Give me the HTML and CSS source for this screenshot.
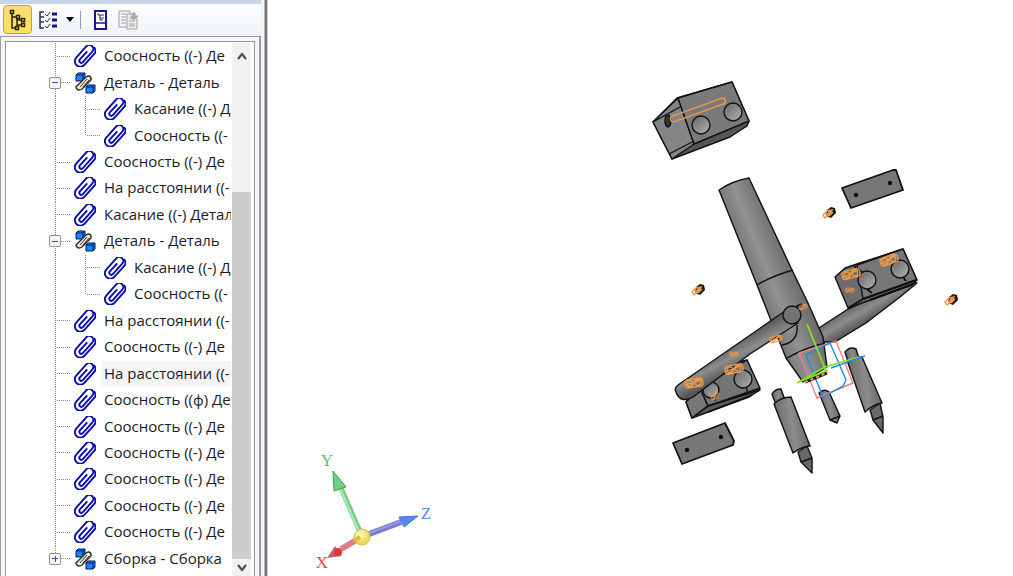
FILE: index.html
```html
<!DOCTYPE html>
<html lang="ru">
<head>
<meta charset="utf-8">
<title>Сборка</title>
<link rel="stylesheet" href="styles.css">
</head>
<body>
<svg class="defs" aria-hidden="true">
  <symbol id="clip" viewBox="0 0 22 22">
    <path transform="translate(11 11) rotate(42)" d="M5.500-6V7a5.500 5.500 0 0 1-11 0V-8a4 4 0 0 1 8 0V6a2 2 0 0 1-4 0V-5M5.500-6V-8a5.500 5 0 0 0-5-4.500" fill="none" stroke="#0a0ab4" stroke-width="1.900"/>
  </symbol>
  <symbol id="mates" viewBox="0 0 22 22">
    <path d="M2 3l2-2h7v6l-2 2H2z" fill="#1688e8" stroke="#05157c"/><path d="M2 3h7v6M9 3l2-2" fill="none" stroke="#05157c"/>
    <path d="M12 15l2-2h7v6l-2 2h-7z" fill="#1688e8" stroke="#05157c"/><path d="M12 15h7v6M19 15l2-2" fill="none" stroke="#05157c"/>
    <path d="M3 14L12 5q3-2 4.500 0T16 9l-8 8q-3 2-5 0t0-3z" fill="#f1eddc" stroke="#292925" stroke-width="1.400"/>
    <path d="M6 15l7-8M9 15l6-7" stroke="#292925" fill="none"/>
  </symbol>
</svg>
<div class="app">
  <aside class="side">
    <div class="strip"></div>
    <div class="toolbar" role="toolbar" aria-label="Дерево">
      <button class="tool active" aria-label="Дерево построения" aria-pressed="true"><svg width="20" height="22" viewBox="0 0 20 22" fill="none" stroke="#28220a" stroke-width="1.500"><path d="M4 5v14h4M4 8h5M9 9v7h4M9 11h4"/><g fill="#f3d456"><path d="M2.500 1.500h3v3h-3zM8.500 6.500h3v3h-3zM13.500 9.500h3v3h-3zM13.500 14.500h3v3h-3zM7.500 17.500h3v3h-3z"/></g></svg></button>
      <button class="tool wide" aria-label="Состав дерева"><svg width="20" height="20" viewBox="0 0 20 20" fill="none" stroke="#33353d"><path d="M6 2H2v16h4M2 7h4M2 12h4" stroke-width="1.500"/><path d="M7 4l2 2 3-4M7 10l2 2 3-4M7 16l2 2 3-4"/><path d="M14 4h5M14 10h5M14 16h5" stroke="#171796" stroke-width="3"/></svg><svg width="8" height="5" viewBox="0 0 8 5"><path d="M0 0h8L4 5z"/></svg></button>
      <span class="divider"></span>
      <button class="tool" aria-label="Отношения"><svg width="14" height="20" viewBox="0 0 14 20" fill="none" stroke="#171796"><path d="M2 1h11v18H2z" stroke-width="2" fill="#fff"/><path d="M2 13h11" stroke-width="1.500"/><path d="M5 3v2h2v5h3M7 5h4M7 8h4" stroke="#333"/></svg></button>
      <button class="tool" aria-label="Отчет" disabled><svg width="21" height="20" viewBox="0 0 21 20" fill="none" stroke="#a0a0a0"><path d="M1 1h11v16H1z" fill="#f3f3f3"/><path d="M3 4h5M3 7h5M3 10h5M3 13h5"/><path d="M9 4h6l4 4v11H9z" fill="#eee"/><path d="M11 8h4M11 11h6M11 14h6M11 16h6"/><path d="M14 3h3v3h3l-4.500 4L13 6h2V3" fill="#aaa"/></svg></button>
    </div>
    <div class="frame">
      <div class="panel">
        <ul class="tree" role="tree">
          <li class="row" role="treeitem"><span class="rail"></span><svg class="icon"><use href="#clip"/></svg><span class="label">Соосность ((-) Де</span></li>
          <li class="row" role="treeitem" aria-expanded="true"><span class="rail"><button class="toggle minus" aria-label="Свернуть"></button></span><svg class="icon"><use href="#mates"/></svg><span class="label">Деталь - Деталь</span></li>
          <li class="row" role="treeitem"><span class="rail through"></span><span class="rail"></span><svg class="icon"><use href="#clip"/></svg><span class="label">Касание ((-) Д</span></li>
          <li class="row" role="treeitem"><span class="rail through"></span><span class="rail last"></span><svg class="icon"><use href="#clip"/></svg><span class="label">Соосность ((-</span></li>
          <li class="row" role="treeitem"><span class="rail"></span><svg class="icon"><use href="#clip"/></svg><span class="label">Соосность ((-) Де</span></li>
          <li class="row" role="treeitem"><span class="rail"></span><svg class="icon"><use href="#clip"/></svg><span class="label">На расстоянии ((-</span></li>
          <li class="row" role="treeitem"><span class="rail"></span><svg class="icon"><use href="#clip"/></svg><span class="label">Касание ((-) Детал</span></li>
          <li class="row" role="treeitem" aria-expanded="true"><span class="rail"><button class="toggle minus" aria-label="Свернуть"></button></span><svg class="icon"><use href="#mates"/></svg><span class="label">Деталь - Деталь</span></li>
          <li class="row" role="treeitem"><span class="rail through"></span><span class="rail"></span><svg class="icon"><use href="#clip"/></svg><span class="label">Касание ((-) Д</span></li>
          <li class="row" role="treeitem"><span class="rail through"></span><span class="rail last"></span><svg class="icon"><use href="#clip"/></svg><span class="label">Соосность ((-</span></li>
          <li class="row" role="treeitem"><span class="rail"></span><svg class="icon"><use href="#clip"/></svg><span class="label">На расстоянии ((-</span></li>
          <li class="row" role="treeitem"><span class="rail"></span><svg class="icon"><use href="#clip"/></svg><span class="label">Соосность ((-) Де</span></li>
          <li class="row" role="treeitem" aria-selected="true"><span class="rail"></span><svg class="icon"><use href="#clip"/></svg><span class="label selected">На расстоянии ((-</span></li>
          <li class="row" role="treeitem"><span class="rail"></span><svg class="icon"><use href="#clip"/></svg><span class="label">Соосность ((ф) Де</span></li>
          <li class="row" role="treeitem"><span class="rail"></span><svg class="icon"><use href="#clip"/></svg><span class="label">Соосность ((-) Де</span></li>
          <li class="row" role="treeitem"><span class="rail"></span><svg class="icon"><use href="#clip"/></svg><span class="label">Соосность ((-) Де</span></li>
          <li class="row" role="treeitem"><span class="rail"></span><svg class="icon"><use href="#clip"/></svg><span class="label">Соосность ((-) Де</span></li>
          <li class="row" role="treeitem"><span class="rail"></span><svg class="icon"><use href="#clip"/></svg><span class="label">Соосность ((-) Де</span></li>
          <li class="row" role="treeitem"><span class="rail"></span><svg class="icon"><use href="#clip"/></svg><span class="label">Соосность ((-) Де</span></li>
          <li class="row" role="treeitem" aria-expanded="false"><span class="rail last"><button class="toggle plus" aria-label="Развернуть"></button></span><svg class="icon"><use href="#mates"/></svg><span class="label">Сборка - Сборка</span></li>
        </ul>
        <div class="scroll">
          <button class="arrow" aria-label="Вверх"><svg width="12" height="8" viewBox="0 0 12 8"><path d="M2 7l4-5 4 5" fill="none" stroke="#505050" stroke-width="2.200"/></svg></button>
          <div class="track"><div class="thumb"></div></div>
          <button class="arrow down" aria-label="Вниз"><svg width="12" height="8" viewBox="0 0 12 8"><path d="M2 1l4 5 4-5" fill="none" stroke="#505050" stroke-width="2.200"/></svg></button>
        </div>
      </div>
    </div>
  </aside>
  <main class="view">
    <svg class="model" viewBox="268 0 745 576" preserveAspectRatio="xMinYMin meet" role="img" aria-label="Модель самолета">
      <defs>
        <linearGradient id="body" gradientUnits="userSpaceOnUse" x1="735" y1="245" x2="782" y2="226"><stop offset="0" stop-color="#707070"/><stop offset=".4" stop-color="#929292"/><stop offset="1" stop-color="#646464"/></linearGradient>
        <linearGradient id="wing" gradientUnits="userSpaceOnUse" x1="725" y1="347" x2="737" y2="370"><stop offset="0" stop-color="#606060"/><stop offset=".5" stop-color="#8c8c8c"/><stop offset="1" stop-color="#565656"/></linearGradient>
        <linearGradient id="wing2" gradientUnits="userSpaceOnUse" x1="857" y1="300" x2="870" y2="322"><stop offset="0" stop-color="#606060"/><stop offset=".5" stop-color="#8c8c8c"/><stop offset="1" stop-color="#505050"/></linearGradient>
        <linearGradient id="hole" x1="0" y1="0" x2="1" y2="1"><stop offset="0" stop-color="#666"/><stop offset="1" stop-color="#b2b2b2"/></linearGradient>
        <linearGradient id="tube" x1="0" y1=".5" x2="1" y2=".3"><stop offset="0" stop-color="#666"/><stop offset=".5" stop-color="#8c8c8c"/><stop offset="1" stop-color="#606060"/></linearGradient>
        <radialGradient id="ball" cx=".4" cy=".35"><stop offset="0" stop-color="#fffcd0"/><stop offset="1" stop-color="#eadb5a"/></radialGradient>
        <g id="bolt"><path d="M-2-3L2-6 6-5 7 0 2 5-3 3z" fill="#1b1712"/><path d="M-6 2l4-4 5-1-3 5-4 3zM-3 3L2-3M0 3l4-4" fill="none" stroke="#f09a48" stroke-width="1.500"/></g>
        <g id="mark" fill="none" stroke="#f09a48" stroke-width="1.300"><rect x="-9" y="-4" width="18" height="8" rx="3"/><circle cx="-4" r="3"/><circle cx="4" r="3"/><path d="M-9 1L8-2M-7 4L7-4"/></g>
      </defs>
      <g stroke="#111" stroke-width="1.400" stroke-linejoin="round">
        <path d="M653 122L677 98 732 82 749 121 747 126 730 137 672 159z" fill="#555"/>
        <path d="M653 122L678 98 694 144 672 159z" fill="#858585"/>
        <path d="M678 98L732 82 749 121 694 144z" fill="#7a7a7a"/>
        <path d="M653 122L680 107M669 154L694 141" fill="none"/>
        <ellipse cx="668" cy="121" rx="3" ry="6" fill="#333"/>
        <circle cx="701" cy="125" r="9" fill="url(#hole)"/><circle cx="733" cy="112" r="9" fill="url(#hole)"/>

        <path d="M842 188L893 170 896 170 903 190 851 208z" fill="#777" stroke-width="1.800"/>
        <circle cx="856" cy="195" r="1.500"/><circle cx="890" cy="183" r="1.500"/>
        <path d="M673 443L725 423 734 441 733 445 682 464z" fill="#777" stroke-width="1.800"/>
        <circle cx="687" cy="450" r="1.500"/><circle cx="721" cy="437" r="1.500"/>

        <path d="M917 283L900 297 866 323 835 342H823L819 328 848 309 905 282z" fill="url(#wing2)"/>
        <path d="M835 277L845 268 860 263 903 249 917 280 912 285 848 308z" fill="#6c6c6c"/>
        <path d="M857 265L903 249 917 280 863 299z" fill="#777"/>
        <path d="M848 308L863 299 916 280M870 300l43-16" fill="none" stroke-width="2"/>
        <circle cx="867" cy="280" r="9" fill="url(#hole)"/><circle cx="900" cy="269" r="9" fill="url(#hole)"/>
        <path d="M867 289l5 4M903 277l3 4M854 266l8 6" fill="none" stroke-width="2"/>

        <path d="M719 190Q732 181 749 178L792 270 808 303 823 337 827 367 803 382 786 358 770 318 757 285z" fill="url(#body)"/>
        <path d="M757 285Q772 276 793 270M787 358Q805 348 825 343" fill="none"/>
        <path d="M797 325q2 17-15 20" fill="#858585"/>

        <path d="M686 402L705 370 747 360 760 390 749 397 692 418z" fill="#5a5a5a"/>
        <path d="M686 402L700 388 708 406 692 418z" fill="#777"/>
        <path d="M700 388L747 360 760 388 708 406z" fill="#757575"/>
        <path d="M692 418L708 406 760 390M708 412l44-17" fill="none"/>
        <circle cx="711" cy="390" r="8" fill="url(#hole)"/><circle cx="743" cy="379" r="9" fill="url(#hole)"/>
        <path d="M747 388v5M715 397v4" fill="none"/>
        <path d="M678 385L785 311 798 323 750 354 693 397Q680 404 676 392 674 388 678 385z" fill="url(#wing)"/>
        <circle cx="792" cy="315" r="9" fill="#747474"/>
        <path d="M797 307l5-2" stroke-width="4"/>

        <path d="M772 394Q775 389 781 389L785 400 776 405z" fill="url(#tube)"/>
        <path d="M798 452L801 462 812 473 812 458 807 446z" fill="#686868"/><path d="M801 462l11-4"/>
        <path d="M774 404Q781 397 791 397L810 446Q801 447 793 453z" fill="url(#tube)"/>
        <path d="M819 393Q824 388 829 392L840 416 837 423 830 420z" fill="url(#tube)"/><path d="M830 420l10-4"/>
        <path d="M845 352Q850 346 856 349L860 362 849 365z" fill="url(#tube)"/>
        <path d="M870 410L873 420 883 433 883 417 880 403z" fill="#686868"/><path d="M873 420l10-4"/>
        <path d="M848 363Q854 357 862 357L882 403Q872 405 865 412z" fill="url(#tube)"/>
      </g>
      <rect x="669" y="107" width="58" height="6" rx="3" transform="rotate(-20 698 110)" fill="none" stroke="#f09a48" stroke-width="1.400"/>
      <use href="#mark" transform="translate(851 274) rotate(-15)"/><use href="#mark" transform="translate(889 260) rotate(-20)"/>
      <use href="#mark" transform="translate(694 383) rotate(-8)"/><use href="#mark" transform="translate(734 369) rotate(-12)"/>
      <use href="#mark" transform="translate(776 339) rotate(-15) scale(.7)"/><use href="#mark" transform="translate(803 307) rotate(-15) scale(.5)"/>
      <use href="#mark" transform="translate(734 354) scale(.5)"/><use href="#mark" transform="translate(850 290) scale(.5)"/><use href="#mark" transform="translate(715 396) rotate(-50) scale(.5)"/>
      <use href="#bolt" x="829" y="213"/><use href="#bolt" x="698" y="290"/><use href="#bolt" x="951" y="300"/>
      <g fill="none" stroke-width="1.400">
        <path d="M799 353L836 341 853 383 817 398z" stroke="#ef7c83"/>
        <path d="M806 355L830 343 846 380 843 386 823 397z" stroke="#238ce4"/>
        <path d="M805 382l22-9" stroke="#1b1712" stroke-width="3"/><path d="M805 382l22-9" stroke="#f09a48" stroke-width="2" stroke-dasharray="3 3"/>
        <path d="M807 324L826 371M797 383L825 367 859 357M801 381l27-11" stroke="#7fe51c" stroke-width="1.800"/>
        <path d="M831 368L865 356" stroke="#238ce4"/>
      </g>
      <g>
        <path d="M361 534L341 488" stroke="#76ca88" stroke-width="5"/><path d="M360 534L340 488" stroke="#a9ecb4" stroke-width="2"/>
        <path d="M333 471L334 491 346 487z" fill="#70cd83" stroke="#469a58"/>
        <path d="M364 536L401 522" stroke="#757dce" stroke-width="6"/><path d="M364 535L401 521" stroke="#949be7" stroke-width="2"/>
        <path d="M418 516L399 517 404 527z" fill="#5686e6" stroke="#4b75cd"/>
        <path d="M360 538L341 549" stroke="#dc8084" stroke-width="6"/>
        <path d="M327 558L335 546 342 556z" fill="#bd6666"/><circle cx="338" cy="552" r="4" fill="#df3438"/>
        <circle cx="362" cy="537" r="8" fill="url(#ball)" stroke="#d2c250"/>
        <path d="M354 541l6-4" stroke="#eeb24b" stroke-width="4"/>
      </g>
      <g class="axis"><text x="327" y="466" fill="#59c46c">Y</text><text x="426" y="519" fill="#568dec">Z</text><text x="322" y="568" fill="#e9484c">X</text></g>
    </svg>
  </main>
</div>
</body>
</html>
```
FILE: styles.css
```css
* { box-sizing: border-box; }
body { margin: 0; background: #fff; font-family: "Open Sans", "Noto Sans", sans-serif; font-size: 15px; color: #1c1c24; }
button { border: 0; padding: 0; background: none; color: inherit; font: inherit; }
.defs { position: absolute; width: 0; height: 0; }
.app { display: flex; height: 100vh; min-height: 570px; }
.side { display: flex; flex-direction: column; flex: none; width: 268px; padding-right: 7px; background: linear-gradient(to right, #edf0f5 262px, #f7f7f7 263px 264px, #737373 265px 267px, #d5d5d5 267px); }
.strip { height: 4px; background: #c6d5e6; }
.toolbar { display: flex; align-items: center; height: 32px; padding: 0 3px 1px; background: linear-gradient(#fdfeff, #eef2f8); }
.tool { display: flex; align-items: center; justify-content: center; width: 29px; height: 29px; }
.active { border: 1px solid #c2a148; border-radius: 4px; background: linear-gradient(#f6dc72, #ffe257); }
.wide { width: 48px; gap: 8px; }
.divider { width: 1px; height: 18px; margin: 0 4px 0 0; background: #8c9db2; }
.frame { display: flex; flex: 1; min-height: 0; padding: 4px 4px 0; border: 1px solid #9a9ba3; border-width: 1px 2px 0 1px; background: #f5f5f8; }
.panel { display: flex; flex: 1; min-width: 0; padding: 1px 3px 0 0; border: 1px solid #94949b; border-bottom: 0; background: #fff; }
.tree { display: grid; flex: 1; grid-auto-rows: minmax(26px, 1fr); min-width: 0; margin: 0; padding: 0 1px 4px 43px; list-style: none; overflow: hidden; }
.row { display: flex; align-items: center; min-width: 0; overflow: hidden; }
.rail { display: flex; flex: none; align-items: center; align-self: stretch; width: 22px;
  background:
    repeating-linear-gradient(to bottom, #8c8c8c 0 1px, transparent 1px 2px) 6px 0 / 1px 100% no-repeat,
    repeating-linear-gradient(to right, #8c8c8c 0 1px, transparent 1px 2px) 8px 50% / 14px 1px no-repeat; }
.through { width: 30px; background: repeating-linear-gradient(to bottom, #8c8c8c 0 1px, transparent 1px 2px) 6px 0 / 1px 100% no-repeat; }
.last {
  background:
    repeating-linear-gradient(to bottom, #8c8c8c 0 1px, transparent 1px 2px) 6px 0 / 1px 50% no-repeat,
    repeating-linear-gradient(to right, #8c8c8c 0 1px, transparent 1px 2px) 8px 50% / 14px 1px no-repeat; }
.toggle { width: 12px; height: 12px; border: 1px solid #949494; border-radius: 2px; }
.minus { background: linear-gradient(#39549c, #39549c) center / 6px 1px no-repeat, #f5f5f5; }
.plus { background: linear-gradient(#39549c, #39549c) center / 6px 1px no-repeat, linear-gradient(#39549c, #39549c) center / 1px 6px no-repeat, #f5f5f5; }
.icon { flex: none; width: 22px; height: 22px; margin: 0 5px 0 3px; }
.label { flex: 1; min-width: 0; padding: 0 0 2px 3px; line-height: 24px; white-space: nowrap; }
.selected { background: #f4f4f4; }
.scroll { display: flex; flex: none; flex-direction: column; width: 19px; background: #f1f1f1; }
.arrow { display: grid; height: 26px; place-items: center; }
.down { height: 17px; }
.track { display: flex; flex: 1; flex-direction: column; justify-content: flex-end; }
.thumb { height: 75%; background: #cdcdcd; }
.view { flex: 1; min-width: 0; overflow: hidden; }
.model { display: block; width: 100%; height: 100%; }
.axis { font-family: "Liberation Serif", serif; font-size: 17px; text-anchor: middle; }
```
